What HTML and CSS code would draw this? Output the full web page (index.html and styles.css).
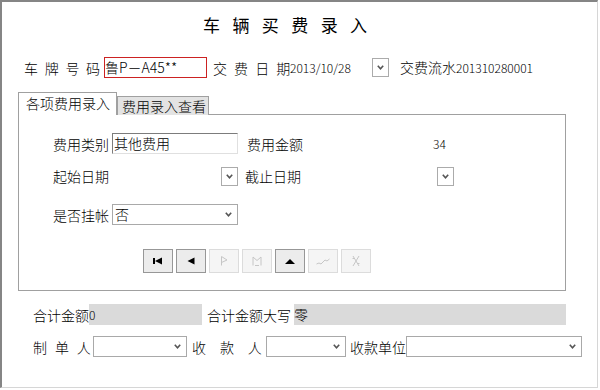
FILE: index.html
```html
<!DOCTYPE html>
<html lang="zh-CN">
<head>
<meta charset="UTF-8">
<title>车辆买费录入</title>
<link rel="stylesheet" href="styles.css">
</head>
<body>
<div class="window">
  <h1 class="title">车 辆 买 费 录 入</h1>

  <!-- 车牌号码 / 交费日期 / 交费流水 -->
  <div class="row head-row">
    <span class="lbl plate-lbl">车 牌 号 码</span>
    <div class="plate-box">鲁P－A45**</div>
    <span class="lbl date-lbl">交 费 日 期</span>
    <span class="num date-val">2013/10/28</span>
    <span class="dd-btn"><svg width="7" height="5" viewBox="0 0 7 5"><polyline points="0.8,0.8 3.5,3.8 6.2,0.8" fill="none" stroke="#555" stroke-width="1.6"/></svg></span>
    <span class="lbl serial">交费流水<span class="num">201310280001</span></span>
  </div>

  <!-- 标签页 -->
  <div class="tabs">
    <div class="tab active">各项费用录入</div>
    <div class="tab">费用录入查看</div>
  </div>
  <div class="panel">
    <div class="row row-a">
      <span class="lbl kind-lbl">费用类别</span>
      <div class="field sunken">其他费用</div>
      <span class="lbl amount-lbl">费用金额</span>
      <span class="num">34</span>
    </div>
    <div class="row row-b">
      <span class="lbl start-lbl">起始日期</span>
      <span class="dd-btn"><svg width="7" height="5" viewBox="0 0 7 5"><polyline points="0.8,0.8 3.5,3.8 6.2,0.8" fill="none" stroke="#555" stroke-width="1.6"/></svg></span>
      <span class="lbl end-lbl">截止日期</span>
      <span class="dd-btn"><svg width="7" height="5" viewBox="0 0 7 5"><polyline points="0.8,0.8 3.5,3.8 6.2,0.8" fill="none" stroke="#555" stroke-width="1.6"/></svg></span>
    </div>
    <div class="row row-c">
      <span class="lbl kind-lbl">是否挂帐</span>
      <div class="combo w126"><span>否</span><svg width="7" height="5" viewBox="0 0 7 5"><polyline points="0.8,0.8 3.5,3.8 6.2,0.8" fill="none" stroke="#555" stroke-width="1.6"/></svg></div>
    </div>

    <!-- 记录导航 -->
    <div class="row nav">
      <span class="nav-btn"><svg width="12" height="8" viewBox="0 0 12 8"><rect x="1" y="1" width="2" height="6"/><polygon points="3,4 10,0.5 10,7.5"/></svg></span>
      <span class="nav-btn"><svg width="8" height="8" viewBox="0 0 8 8"><polygon points="0.5,4 7.5,0.5 7.5,7.5"/></svg></span>
      <span class="nav-btn off"><svg width="8" height="10" viewBox="0 0 8 10"><path d="M1.5 9.5V0.5L7 4L1.5 6.5" fill="none" stroke="#c6c6c6"/></svg></span>
      <span class="nav-btn off"><svg width="10" height="10" viewBox="0 0 10 10"><path d="M1 9.5V1L5 4.5L9 1V9.5M3 9.5H7" fill="none" stroke="#c6c6c6"/></svg></span>
      <span class="nav-btn"><svg width="10" height="5" viewBox="0 0 10 5"><polygon points="0,5 5,0 10,5"/></svg></span>
      <span class="nav-btn off"><svg width="14" height="7" viewBox="0 0 14 7"><path d="M0.5 6L3 5L5 6L9 2L11 3L13.5 1" fill="none" stroke="#c6c6c6"/></svg></span>
      <span class="nav-btn off"><svg width="8" height="12" viewBox="0 0 8 12"><path d="M1 1L7 11M7 1L1 11M0.5 3.5H2.5M5.5 8.5H7.5" fill="none" stroke="#c6c6c6"/></svg></span>
    </div>
  </div>

  <!-- 合计 -->
  <div class="row sum-row">
    <span class="lbl sum-lbl">合计金额</span>
    <div class="ro-box w113"><span class="num">0</span></div>
    <span class="lbl big-lbl">合计金额大写</span>
    <div class="ro-box w272">零</div>
  </div>
  <div class="row sign-row">
    <span class="lbl maker-lbl">制 单 人</span>
    <div class="combo w94"><span></span><svg width="7" height="5" viewBox="0 0 7 5"><polyline points="0.8,0.8 3.5,3.8 6.2,0.8" fill="none" stroke="#555" stroke-width="1.6"/></svg></div>
    <span class="lbl payee-lbl">收 款 人</span>
    <div class="combo w80"><span></span><svg width="7" height="5" viewBox="0 0 7 5"><polyline points="0.8,0.8 3.5,3.8 6.2,0.8" fill="none" stroke="#555" stroke-width="1.6"/></svg></div>
    <span class="lbl unit-lbl">收款单位</span>
    <div class="combo w176"><span></span><svg width="7" height="5" viewBox="0 0 7 5"><polyline points="0.8,0.8 3.5,3.8 6.2,0.8" fill="none" stroke="#555" stroke-width="1.6"/></svg></div>
  </div>
</div>
</body>
</html>
```

FILE: styles.css
```css
* {
box-sizing: border-box;
}
body {
margin: 0;
background: #fff;
color: #000;
font-family: "Noto Sans CJK SC", sans-serif;
font-size: 14px;
font-weight: 300;
}
.window {
width: 598px;
height: 388px;
border-left: 2px solid #858585;
border-top: 2px solid #858585;
border-right: 1px solid #d6d6d6;
border-bottom: 1px solid #d6d6d6;
}
.title {
margin: 12px 0 0;
padding-left: 201px;
height: 22px;
font-size: 17px;
font-weight: normal;
line-height: 22px;
letter-spacing: 4.3px;
white-space: nowrap;
}
.row {
display: flex;
align-items: center;
white-space: nowrap;
}
.lbl {
flex: none;
line-height: 18px;
overflow: visible;
}
.num {
font-size: 12px;
}

/* 第一行 */
.head-row {
margin-top: 21px;
height: 21px;
padding-left: 22px;
}
.plate-lbl {
width: 80px;
letter-spacing: 1.8px;
}
.plate-box {
width: 103px;
height: 21px;
border: 1px solid #cc2222;
line-height: 19px;
}
.date-lbl {
width: 77px;
margin-left: 6px;
letter-spacing: 2px;
}
.date-val {
width: 82px;
}
.dd-btn {
flex: none;
display: flex;
align-items: center;
justify-content: center;
width: 17px;
height: 19px;
border: 1px solid #ababab;
background: #fff;
}
.serial {
margin-left: 11px;
}

/* 标签页 */
.tabs {
display: flex;
align-items: flex-end;
margin: 14px 0 0 16px;
height: 23px;
}
.tab {
height: 19px;
width: 92px;
border: 1px solid #a0a0a0;
border-bottom: none;
background: #e3e3e3;
padding-left: 4px;
line-height: 18px;
}
.tab.active {
position: relative;
z-index: 1;
width: 99px;
height: 23px;
background: #fff;
padding-left: 7px;
line-height: 20px;
}
.panel {
margin: -1px 0 0 16px;
width: 548px;
height: 177px;
border: 1px solid #a0a0a0;
}
.row-a {
margin-top: 18px;
height: 21px;
padding-left: 34px;
}
.kind-lbl {
width: 59px;
}
.field {
width: 126px;
height: 21px;
padding-left: 1px;
line-height: 19px;
}
.sunken {
border: 1px solid;
border-color: #7c7c7c #e0e0e0 #e0e0e0 #7c7c7c;
}
.amount-lbl {
width: 186px;
margin-left: 9px;
}
.row-b {
margin-top: 12px;
height: 20px;
padding-left: 34px;
}
.start-lbl {
width: 168px;
}
.end-lbl {
width: 192px;
margin-left: 7px;
}
.row-c {
margin-top: 18px;
height: 21px;
padding-left: 34px;
}
.combo {
flex: none;
display: flex;
align-items: center;
justify-content: space-between;
height: 21px;
padding: 0 5px 0 2px;
border: 1px solid #a9a9a9;
background: #fff;
line-height: 19px;
}
.w126 { width: 126px; }
.w94 { width: 94px; }
.w80 { width: 80px; }
.w176 { width: 176px; }

/* 导航按钮 */
.nav {
margin-top: 24px;
height: 24px;
padding-left: 124px;
gap: 3px;
}
.nav-btn {
display: flex;
align-items: center;
justify-content: center;
width: 30px;
height: 24px;
border: 1px solid #979797;
background: #ececec;
}
.nav-btn.off {
border-color: #dcdcdc;
background: #f5f5f5;
}

/* 合计 */
.sum-row {
margin-top: 13px;
height: 21px;
padding-left: 31px;
}
.sum-lbl {
width: 56px;
}
.ro-box {
flex: none;
height: 21px;
background: #dadada;
line-height: 21px;
}
.w113 { width: 113px; }
.w272 { width: 272px; }
.big-lbl {
width: 87px;
margin-left: 5px;
}
.sign-row {
margin-top: 11px;
height: 21px;
padding-left: 31px;
}
.maker-lbl {
width: 60px;
letter-spacing: 2.4px;
}
.payee-lbl {
width: 74px;
margin-left: 5px;
letter-spacing: 5.4px;
}
.unit-lbl {
width: 56px;
margin-left: 4px;
}
```
